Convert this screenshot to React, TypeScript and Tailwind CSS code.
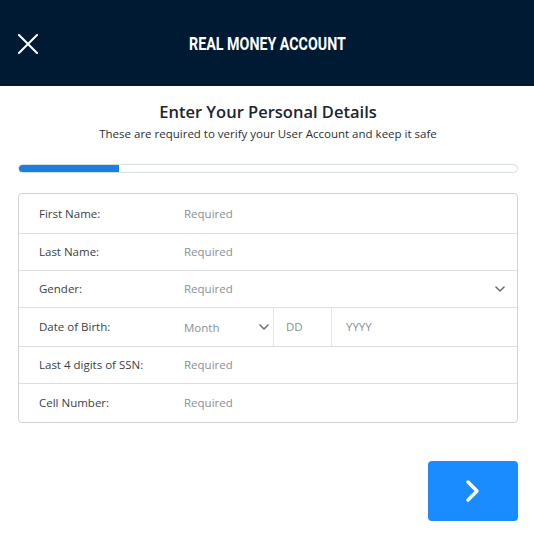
import React from 'react';

const rows = [
  { label: 'First Name:', value: 'Required', h: 39 },
  { label: 'Last Name:', value: 'Required', h: 37 },
  { label: 'Gender:', value: 'Required', select: true, h: 37 },
  { label: 'Date of Birth:', dob: true, h: 39 },
  { label: 'Last 4 digits of SSN:', value: 'Required', h: 37 },
  { label: 'Cell Number:', value: 'Required', h: 39 },
];

function Chevron({ className }: { className?: string }) {
  return (
    <svg viewBox="0 0 10 6" className={className} fill="none" stroke="currentColor" strokeWidth="1.6" strokeLinecap="round" strokeLinejoin="round">
      <path d="M1 1l4 4 4-4" />
    </svg>
  );
}

export default function App() {
  return (
    <div className="w-[534px] h-[534px] bg-white font-['Open_Sans','Liberation_Sans',sans-serif]">
      <header className="h-[86px] bg-[#001a33] flex items-center justify-center relative">
        <svg viewBox="0 0 20 20" className="absolute left-[18px] top-[34px] w-[20px] h-[20px] text-white" stroke="currentColor" strokeWidth="2" strokeLinecap="square">
          <path d="M1 1l18 18M19 1L1 19" />
        </svg>
        <h1 className="inline-block text-white text-[19px] font-bold font-['Roboto',sans-serif] scale-x-[0.75] pt-[2px] whitespace-nowrap">
          REAL MONEY ACCOUNT
        </h1>
      </header>

      <div className="pl-[18px] pr-[16px]">
        <h2 className="mt-[15px] text-center text-[16.5px] font-semibold text-[#1c2530] leading-[22px]">
          Enter Your Personal Details
        </h2>
        <p className="mt-[3px] text-center text-[11.5px] text-[#2a2f36] leading-[16px]">
          These are required to verify your User Account and keep it safe
        </p>

        <div className="mt-[22px] h-[9px] rounded-full border border-[#d8dde2] bg-white overflow-hidden">
          <div className="h-full w-[100px] bg-[#1a7fe0]" />
        </div>

        <div className="mt-[20px] border border-[#cfd3d6] rounded-[4px] text-[11.5px]">
          {rows.map((r, i) => (
            <div
              key={r.label}
              className={`flex items-center ${i > 0 ? 'border-t border-[#dcdfe2]' : ''}`}
              style={{ height: r.h }}
            >
              <span className="w-[165px] pl-[20px] text-[#3a3f45]">{r.label}</span>
              {r.dob ? (
                <div className="flex flex-1 h-full items-center text-[#8a8f95]">
                  <div className="w-[90px] h-full flex items-center justify-between pr-[4px] border-r border-[#e3e5e7]">
                    <span className="pt-[2px]">Month</span>
                    <Chevron className="w-[10px] h-[6px] text-[#6b7178]" />
                  </div>
                  <div className="w-[58px] h-full flex items-center pl-[12px] border-r border-[#e3e5e7]">DD</div>
                  <div className="flex-1 h-full flex items-center pl-[14px]">YYYY</div>
                </div>
              ) : (
                <div className="flex flex-1 items-center justify-between pr-[12px] text-[#8a8f95]">
                  <span>{r.value}</span>
                  {r.select && <Chevron className="w-[10px] h-[6px] text-[#6b7178]" />}
                </div>
              )}
            </div>
          ))}
        </div>

        <div className="mt-[38px] flex justify-end">
          <button className="w-[90px] h-[60px] rounded-[4px] bg-[#1a8cff] flex items-center justify-center">
            <svg viewBox="0 0 16 24" className="w-[16px] h-[24px]" fill="none" stroke="white" strokeWidth="3.4" strokeLinecap="round" strokeLinejoin="round">
              <path d="M3 3l9 9-9 9" />
            </svg>
          </button>
        </div>
      </div>
    </div>
  );
}
